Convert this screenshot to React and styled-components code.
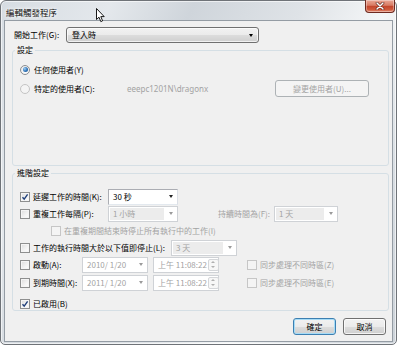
import React from "react";
import styled, { createGlobalStyle } from "styled-components";

const Global = createGlobalStyle`
  html, body { margin: 0; padding: 0; background: #ffffff; }
  body { font-family: "Noto Sans CJK TC", "Noto Sans", sans-serif; font-size: 8px; }
  * { box-sizing: border-box; }
`;

const FONT = `"Noto Sans CJK TC", "Noto Sans", sans-serif`;
const DIS = "#a3a3a3";

const Window = styled.div`
  position: relative;
  width: 397px;
  height: 345px;
  border: 1px solid #6f7378;
  border-radius: 6px 6px 5px 5px;
  padding: 0 3px 2px 3px;
  display: flex;
  flex-direction: column;
  background: linear-gradient(115deg, #d6dce2 0%, #e4e8ec 20%, #cfd5db 35%, #dfe3e7 55%, #f4f6f7 70%, #d9dee3 85%, #cdd3d9 100%);
  box-shadow: inset 0 0 0 1px rgba(255,255,255,0.6);
  font-family: ${FONT};
`;

const TitleBar = styled.div`
  height: 19px;
  display: flex;
  align-items: flex-start;
  justify-content: space-between;
`;

const Title = styled.div`
  padding: 6px 0 0 2px;
  font-size: 8.5px;
  line-height: 10px;
  color: #111;
  text-shadow: 0 0 3px #fff, 0 0 5px #fff;
`;

const Close = styled.div`
  width: 30px;
  height: 13px;
  margin-top: -1px;
  margin-right: -2px;
  border: 1px solid #6e2a20;
  border-top: none;
  border-radius: 0 0 4px 4px;
  background: linear-gradient(#eaa796 0%, #d77a63 45%, #c2432b 50%, #cf5a3c 80%, #e5927a 100%);
  display: flex;
  align-items: center;
  justify-content: center;
  box-shadow: inset 0 0 0 1px rgba(255,255,255,0.35);
`;

const Client = styled.div`
  flex: 1;
  background: #f0f0f0;
  border: 1px solid #949ca4;
  display: flex;
  flex-direction: column;
  font-size: 8px;
  line-height: 10px;
  color: #000;
`;

const TopRow = styled.div`
  display: flex;
  align-items: center;
  margin-top: 6px;
  padding-left: 9px;
  height: 16px;
`;

const Label = styled.span`
  width: ${p => p.$w ? p.$w + "px" : "auto"};
  flex: none;
  color: ${p => p.$dis ? DIS : "#000"};
  white-space: nowrap;
  text-align: ${p => p.$right ? "right" : "left"};
  padding-right: ${p => p.$right ? "4px" : "0"};
`;

const ListSelect = styled.div`
  width: 193px;
  height: 16px;
  border: 1px solid #707070;
  border-radius: 3px;
  background: linear-gradient(#f2f2f2 0%, #ebebeb 50%, #dddddd 50%, #cfcfcf 100%);
  box-shadow: inset 0 0 0 1px rgba(255,255,255,0.7);
  display: flex;
  align-items: center;
  justify-content: space-between;
  padding: 0 5px 0 5px;
`;

const Tri = styled.span`
  width: 0;
  height: 0;
  border-left: 2.5px solid transparent;
  border-right: 2.5px solid transparent;
  border-top: 3px solid ${p => p.$c || "#000"};
`;

const Group = styled.fieldset`
  margin: ${p => p.$mt}px 0 0 7px;
  padding: 0;
  width: 377px;
  border: 1px solid #d5dfe5;
  border-radius: 3px;
`;

const Legend = styled.legend`
  margin-left: 2px;
  padding: 0 2px;
  font-size: 8px;
  line-height: 10px;
  color: #000;
`;

const GroupBody = styled.div`
  height: ${p => p.$h}px;
  padding: ${p => p.$pt}px 0 0 7px;
  display: flex;
  flex-direction: column;
`;

const Row = styled.div`
  display: flex;
  align-items: center;
  height: ${p => p.$h || 17}px;
  margin-top: ${p => p.$mt || 0}px;
  padding-left: ${p => p.$pl || 0}px;
  flex: none;
`;

const RadioItem = styled.label`
  display: flex;
  align-items: center;
  gap: 4px;
  width: ${p => p.$w ? p.$w + "px" : "auto"};
  flex: none;
  white-space: nowrap;
`;

const Radio = styled.span`
  width: 10px;
  height: 10px;
  border-radius: 50%;
  border: 1px solid ${p => p.$dis ? "#c4c4c4" : "#8b8e91"};
  background: ${p => p.$dis ? "#f4f4f4" : "radial-gradient(circle at 60% 65%, #ffffff 0%, #e6e6e6 100%)"};
  display: flex;
  align-items: center;
  justify-content: center;
  flex: none;
  &::after {
    content: "";
    display: ${p => p.$on ? "block" : "none"};
    width: 5px;
    height: 5px;
    border-radius: 50%;
    background: radial-gradient(circle at 35% 35%, #9fd0f5 0%, #2f73b8 55%, #174b86 100%);
  }
`;

const CheckItem = styled.label`
  display: flex;
  align-items: center;
  gap: 3px;
  width: ${p => p.$w ? p.$w + "px" : "auto"};
  flex: none;
  white-space: nowrap;
  color: ${p => p.$dis ? DIS : "#000"};
`;

const Box = styled.span`
  width: 10px;
  height: 10px;
  flex: none;
  border: 1px solid ${p => p.$dis ? "#c6c6c6" : "#8e8f8f"};
  background: ${p => p.$dis ? "#f4f4f4" : "linear-gradient(135deg, #dcdcdc 0%, #f4f4f4 60%, #ffffff 100%)"};
  box-shadow: inset 0 0 0 1px ${p => p.$dis ? "#f4f4f4" : "#f5f5f5"};
  display: flex;
  align-items: center;
  justify-content: center;
`;

const UserName = styled.span`
  width: 148px;
  flex: none;
  color: ${DIS};
  font-family: "Noto Sans", sans-serif;
`;

const DisButton = styled.div`
  width: 94px;
  height: 17px;
  border: 1px solid #adb2b5;
  border-radius: 3px;
  background: #f4f4f4;
  color: ${DIS};
  display: flex;
  align-items: center;
  justify-content: center;
`;

const Combo = styled.div`
  width: ${p => p.$w}px;
  height: 16px;
  flex: none;
  border: 1px solid ${p => p.$dis ? "#cfd2d6" : "#abadb3"};
  border-right-color: ${p => p.$dis ? "#cfd2d6" : "#dbdfe6"};
  border-bottom-color: ${p => p.$dis ? "#cfd2d6" : "#e3e9ef"};
  background: #ffffff;
  display: flex;
  align-items: stretch;
  color: ${p => p.$dis ? DIS : "#000"};
`;

const ComboText = styled.span`
  flex: 1;
  display: flex;
  align-items: center;
  padding-left: 3px;
  margin: 1px 0 1px 1px;
  background: ${p => p.$gray ? "#ececec" : "transparent"};
  white-space: nowrap;
`;

const ComboArrow = styled.span`
  width: 13px;
  flex: none;
  display: flex;
  align-items: center;
  justify-content: center;
`;

const Spin = styled.span`
  width: 11px;
  flex: none;
  margin: 1px;
  border: 1px solid #d4d6d9;
  border-radius: 2px;
  display: flex;
  flex-direction: column;
  align-items: center;
  justify-content: space-around;
  background: #f7f7f7;
`;

const UpTri = styled.span`
  width: 0;
  height: 0;
  border-left: 2px solid transparent;
  border-right: 2px solid transparent;
  border-bottom: 2px solid #b0b0b0;
`;

const DownTri = styled.span`
  width: 0;
  height: 0;
  border-left: 2px solid transparent;
  border-right: 2px solid transparent;
  border-top: 2px solid #b0b0b0;
`;

const Gap = styled.span`
  width: ${p => p.$w}px;
  flex: none;
`;

const Footer = styled.div`
  display: flex;
  justify-content: flex-end;
  gap: 7px;
  margin-top: 7px;
  padding-right: 6px;
`;

const Button = styled.div`
  width: 43px;
  height: 17px;
  border: 1px solid ${p => p.$def ? "#3c7fb1" : "#707070"};
  border-radius: 3px;
  background: linear-gradient(#f2f2f2 0%, #ebebeb 50%, #dddddd 50%, #cfcfcf 100%);
  box-shadow: inset 0 0 0 1px ${p => p.$def ? "#a6dcf7" : "rgba(255,255,255,0.75)"};
  display: flex;
  align-items: center;
  justify-content: center;
  color: #000;
`;

const Cursor = styled.svg`
  position: absolute;
  left: 95px;
  top: 7px;
`;

function Check({ on, dis }) {
  return (
    <Box $dis={dis}>
      {on && (
        <svg width="8" height="8" viewBox="0 0 8 8">
          <path d="M1.5 4.2 L3.2 6.2 L6.6 1.4" fill="none" stroke="#1f3f7a" strokeWidth="1.4" />
        </svg>
      )}
    </Box>
  );
}

function DropCombo({ w, text, dis, gray }) {
  return (
    <Combo $w={w} $dis={dis}>
      <ComboText $gray={gray}>{text}</ComboText>
      <ComboArrow>
        <Tri $c={dis ? "#9a9a9a" : "#222"} />
      </ComboArrow>
    </Combo>
  );
}

function TimeField({ text }) {
  return (
    <Combo $w={66} $dis>
      <ComboText>{text}</ComboText>
      <Spin>
        <UpTri />
        <DownTri />
      </Spin>
    </Combo>
  );
}

export default function App() {
  return (
    <>
      <Global />
      <Window>
        <TitleBar>
          <Title>編輯觸發程序</Title>
          <Close>
            <svg width="10" height="8" viewBox="0 0 10 8">
              <path d="M2 1 L8 7 M8 1 L2 7" stroke="#5a1a10" strokeWidth="2.6" strokeLinecap="round" />
              <path d="M2 1 L8 7 M8 1 L2 7" stroke="#ffffff" strokeWidth="1.5" strokeLinecap="round" />
            </svg>
          </Close>
        </TitleBar>
        <Client>
          <TopRow>
            <Label $w={52}>開始工作(G):</Label>
            <ListSelect>
              <span>登入時</span>
              <Tri />
            </ListSelect>
          </TopRow>

          <Group $mt={2}>
            <Legend>設定</Legend>
            <GroupBody $h={110} $pt={5}>
              <Row $h={19}>
                <RadioItem>
                  <Radio $on />
                  <span>任何使用者(Y)</span>
                </RadioItem>
              </Row>
              <Row $h={19}>
                <RadioItem $w={107}>
                  <Radio $dis />
                  <span>特定的使用者(C):</span>
                </RadioItem>
                <UserName>{"eeepc1201N\\dragonx"}</UserName>
                <DisButton>變更使用者(U)...</DisButton>
              </Row>
            </GroupBody>
          </Group>

          <Group $mt={2}>
            <Legend>進階設定</Legend>
            <GroupBody $h={132} $pt={10}>
              <Row>
                <CheckItem $w={88}>
                  <Check on />
                  <span>延遲工作的時間(K):</span>
                </CheckItem>
                <DropCombo w={70} text="30 秒" />
              </Row>
              <Row>
                <CheckItem $w={88}>
                  <Check />
                  <span>重複工作每隔(P):</span>
                </CheckItem>
                <DropCombo w={70} text="1 小時" dis gray />
                <Label $w={96} $dis $right>持續時間為(F):</Label>
                <DropCombo w={64} text="1 天" dis gray />
              </Row>
              <Row $pl={31}>
                <CheckItem $dis>
                  <Check dis />
                  <span>在重複期間結束時停止所有執行中的工作(I)</span>
                </CheckItem>
              </Row>
              <Row>
                <CheckItem $w={151}>
                  <Check />
                  <span>工作的執行時間大於以下值即停止(L):</span>
                </CheckItem>
                <DropCombo w={66} text="3 天" dis gray />
              </Row>
              <Row>
                <CheckItem $w={62}>
                  <Check />
                  <span>啟動(A):</span>
                </CheckItem>
                <DropCombo w={66} text="2010/  1/20" dis />
                <Gap $w={5} />
                <TimeField text="上午 11:08:22" />
                <Gap $w={28} />
                <CheckItem $dis>
                  <Check dis />
                  <span>同步處理不同時區(Z)</span>
                </CheckItem>
              </Row>
              <Row $mt={1}>
                <CheckItem $w={62}>
                  <Check />
                  <span>到期時間(X):</span>
                </CheckItem>
                <DropCombo w={66} text="2011/  1/20" dis />
                <Gap $w={5} />
                <TimeField text="上午 11:08:22" />
                <Gap $w={28} />
                <CheckItem $dis>
                  <Check dis />
                  <span>同步處理不同時區(E)</span>
                </CheckItem>
              </Row>
              <Row $h={12} $mt={7}>
                <CheckItem>
                  <Check on />
                  <span>已啟用(B)</span>
                </CheckItem>
              </Row>
            </GroupBody>
          </Group>

          <Footer>
            <Button $def>確定</Button>
            <Button>取消</Button>
          </Footer>
        </Client>
        <Cursor width="10" height="15" viewBox="0 0 10 15">
          <path d="M0.5 0.5 L0.5 11.5 L3 9.2 L4.8 13.6 L6.6 12.8 L4.8 8.6 L8.2 8.6 Z" fill="#ffffff" stroke="#000" strokeWidth="0.9" strokeLinejoin="round" />
        </Cursor>
      </Window>
    </>
  );
}
